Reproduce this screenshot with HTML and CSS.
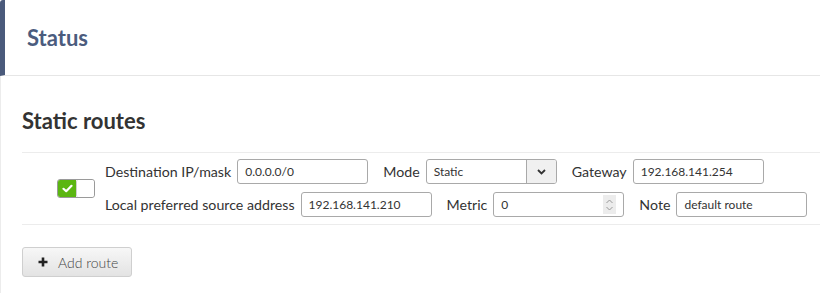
FILE: index.html
```html
<!DOCTYPE html>
<html lang="en">

    <head>
        <meta charset="UTF-8">
        <title>Static routes</title>
        <link rel="stylesheet" href="styles.css">
    </head>

    <body>
        <div class="page-header">
            <h1 class="page-title">Status</h1>
        </div>

        <div class="content">
            <h2 class="section-title">Static routes</h2>

            <div class="route-row">
                <div class="toggle-cell">
                    <div class="toggle">
                        <span class="toggle-on">
                            <svg width="11" height="9" viewBox="0 0 11 9">
                                <path d="M1.5 4.8 L4.2 7.2 L9.5 1.8" fill="none" stroke="#fff" stroke-width="2.2" stroke-linecap="round" stroke-linejoin="round"/>
                            </svg>
                        </span>
                        <span class="toggle-knob"></span>
                    </div>
                </div>

                <div class="fields">
                    <div class="field-line">
                        <div class="field">
                            <label class="field-label">Destination IP/mask</label>
                            <input class="text-input" type="text" value="0.0.0.0/0">
                        </div>
                        <div class="field">
                            <label class="field-label">Mode</label>
                            <div class="select">
                                <span class="select-value">Static</span>
                                <span class="select-arrow">
                                    <svg width="9" height="6" viewBox="0 0 9 6">
                                        <path d="M1 1 L4.5 4.5 L8 1" fill="none" stroke="#333" stroke-width="1.8"/>
                                    </svg>
                                </span>
                            </div>
                        </div>
                        <div class="field">
                            <label class="field-label">Gateway</label>
                            <input class="text-input" type="text" value="192.168.141.254">
                        </div>
                    </div>

                    <div class="field-line">
                        <div class="field">
                            <label class="field-label">Local preferred source address</label>
                            <input class="text-input" type="text" value="192.168.141.210">
                        </div>
                        <div class="field">
                            <label class="field-label">Metric</label>
                            <div class="number-input">
                                <span class="number-value">0</span>
                                <span class="spinner">
                                    <svg width="9" height="16" viewBox="0 0 9 16">
                                        <path d="M1.5 6 L4.5 3 L7.5 6" fill="none" stroke="#999" stroke-width="1"/>
                                        <path d="M1.5 10 L4.5 13 L7.5 10" fill="none" stroke="#999" stroke-width="1"/>
                                    </svg>
                                </span>
                            </div>
                        </div>
                        <div class="field">
                            <label class="field-label">Note</label>
                            <input class="text-input" type="text" value="default route">
                        </div>
                    </div>
                </div>
            </div>

            <button class="btn" type="button">
                <svg class="btn-icon" width="10" height="10" viewBox="0 0 10 10">
                    <path d="M5 0.5 V9.5 M0.5 5 H9.5" stroke="#222" stroke-width="2.6"/>
                </svg>
                Add route
            </button>
        </div>
    </body>

</html>
```

FILE: styles.css
```css
body {
    margin: 0;
    background: #fff;
    font-family: Lato, "Open Sans", sans-serif;
    color: #333;
}

.page-header {
    height: 75px;
    border-left: 5px solid #4a5a7b;
    border-bottom: 1px solid #e6e6e6;
    border-top-left-radius: 3px;
    padding-left: 22px;
    display: flex;
    align-items: center;
}

.page-title {
    margin: 0;
    font-size: 22px;
    font-weight: 700;
    color: #4b5c7e;
}

.content {
    border-left: 1px solid #ececec;
    padding-left: 21px;
    height: 217px;
}

.section-title {
    margin: 0;
    padding-top: 31px;
    font-size: 22px;
    font-weight: 700;
    line-height: 28px;
    color: #333;
}

.route-row {
    display: flex;
    margin-top: 17px;
    border-top: 1px solid #ececec;
    border-bottom: 1px solid #ececec;
    padding: 6px 0 7px;
}

.toggle-cell {
    width: 83px;
    display: flex;
    align-items: center;
}

.toggle {
    margin-left: 35px;
    width: 36px;
    height: 17px;
    border: 1px solid #9a9a9a;
    border-radius: 3px;
    display: flex;
    overflow: hidden;
}

.toggle-on {
    width: 18px;
    background: #5bb611;
    display: flex;
    align-items: center;
    justify-content: center;
}

.toggle-knob {
    flex: 1;
    background: #fff;
    border-left: 1px solid #cfcfcf;
    border-radius: 2px;
}

.fields {
    display: flex;
    flex-direction: column;
    gap: 8px;
}

.field-line {
    display: flex;
    align-items: center;
    gap: 15px;
}

.field {
    display: flex;
    align-items: center;
    gap: 6px;
}

.field-label {
    font-size: 14.2px;
    color: #333;
}

.text-input,
.select,
.number-input {
    box-sizing: border-box;
    width: 131px;
    height: 25px;
    border: 1px solid #a9a9a9;
    border-radius: 3px;
    background: #fff;
    font-family: Lato, "Open Sans", sans-serif;
    font-size: 12px;
    color: #333;
}

.text-input {
    padding: 0 7px;
}

.select {
    display: flex;
    align-items: stretch;
}

.select-value {
    flex: 1;
    padding-left: 7px;
    display: flex;
    align-items: center;
}

.select-arrow {
    width: 29px;
    background: #f0f0f0;
    border-left: 1px solid #a9a9a9;
    border-radius: 0 2px 2px 0;
    display: flex;
    align-items: center;
    justify-content: center;
}

.number-input {
    display: flex;
    align-items: center;
    padding: 0 7px;
}

.number-value {
    flex: 1;
}

.spinner {
    width: 13px;
    height: 19px;
    background: #ececec;
    display: flex;
    align-items: center;
    justify-content: center;
}

.btn {
    margin-top: 22px;
    height: 30px;
    padding: 0 13px 0 15px;
    display: inline-flex;
    align-items: center;
    gap: 10px;
    border: 1px solid #cfcfcf;
    border-radius: 3px;
    background: linear-gradient(#f7f7f7, #e3e3e3);
    font-family: Lato, "Open Sans", sans-serif;
    font-size: 14px;
    font-weight: 300;
    color: #444;
}
```
